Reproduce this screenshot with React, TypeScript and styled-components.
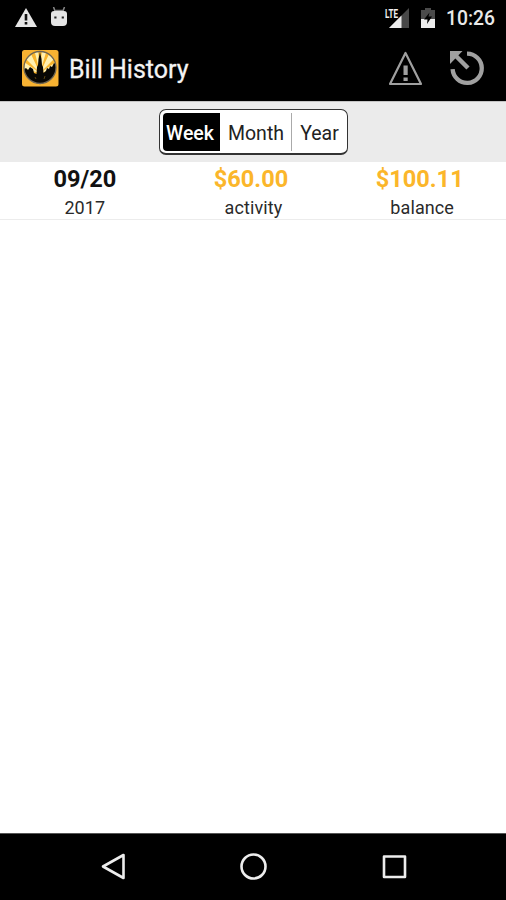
import React from 'react';
import styled, { createGlobalStyle } from 'styled-components';

const GlobalStyle = createGlobalStyle`
  * { box-sizing: border-box; }
  body { margin: 0; background: #fff; font-family: Roboto, "Liberation Sans", sans-serif; }
  svg { display: block; flex: none; }
`;

const Screen = styled.div`
  width: 506px;
  height: 900px;
  display: flex;
  flex-direction: column;
  background: #fff;
  overflow: hidden;
`;

const StatusBar = styled.header`
  height: 36px;
  flex: none;
  display: flex;
  align-items: center;
  justify-content: space-between;
  padding: 0 11px 0 15px;
  background: #000;
`;

const StatusGroup = styled.div<{ $gap: number }>`
  display: flex;
  align-items: center;
  gap: ${(p) => p.$gap}px;
`;

const Clock = styled.span`
  width: 49px;
  padding-top: 1px;
  font-size: 19.3px;
  font-weight: 500;
  line-height: 36px;
  color: #e9e9e9;
  white-space: nowrap;
`;

const AppBar = styled.div`
  height: 65px;
  flex: none;
  display: flex;
  align-items: center;
  padding: 0 21px 1px;
  background: #000;
`;

const Title = styled.h1`
  flex: 1;
  margin: 3px 0 0 10px;
  font-size: 25px;
  font-weight: 400;
  line-height: 32px;
  color: #f4f4f4;
  -webkit-text-stroke: 0.3px #f4f4f4;
`;

const Actions = styled.div`
  display: flex;
  align-items: center;
  gap: 26px;
`;

const FilterStrip = styled.div`
  height: 61px;
  flex: none;
  display: flex;
  justify-content: center;
  padding-top: 7px;
  background: #ebebeb;
  border-top: 1px solid #c4c4c4;
`;

const Segments = styled.div`
  width: 189px;
  height: 46px;
  display: flex;
  padding: 3px;
  margin-left: 1px;
  background: #fff;
  border: 1px solid #333;
  border-bottom-width: 2px;
  border-radius: 7px;
`;

const Segment = styled.button<{ $width: number; $active?: boolean; $divider?: boolean }>`
  width: ${(p) => p.$width}px;
  height: 38px;
  padding: 2px 0 0;
  border: 0;
  border-right: ${(p) => (p.$divider ? '1px solid #aaa' : '0')};
  border-radius: ${(p) => (p.$active ? '4px 0 0 4px' : '0')};
  background: ${(p) => (p.$active ? '#000' : '#fff')};
  color: ${(p) => (p.$active ? '#fff' : '#222')};
  font: ${(p) => (p.$active ? 500 : 400)} 19.5px/38px Roboto, sans-serif;
  text-indent: ${(p) => (p.$active ? '-3px' : p.$divider ? '1px' : '3px')};
  white-space: nowrap;
`;

const Row = styled.div`
  height: 58px;
  flex: none;
  display: grid;
  grid-template-columns: repeat(3, 1fr);
  border-bottom: 1px solid #ececec;
`;

const Cell = styled.div`
  display: flex;
  flex-direction: column;
  align-items: center;
  padding-left: 1px;
`;

const Value = styled.strong<{ $gold?: boolean }>`
  height: 32px;
  font-size: 23.6px;
  font-weight: 700;
  line-height: 34px;
  margin-left: ${(p) => (p.$gold ? '-5px' : '0')};
  color: ${(p) => (p.$gold ? '#fbb62a' : '#111')};
`;

const Label = styled.span`
  font-size: 18px;
  line-height: 27px;
  letter-spacing: 0.1px;
  color: #2a2a2a;
`;

const Content = styled.main`
  flex: 1;
`;

const NavBar = styled.nav`
  height: 67px;
  flex: none;
  display: flex;
  justify-content: center;
  align-items: center;
  gap: 112px;
  padding-left: 1px;
  padding-bottom: 1px;
  background: #000;
  border-top: 1px solid #555;
`;

const WarningSmall = () => (
  <svg width="22" height="20" viewBox="0 0 22 20">
    <path d="M11 0 22 19H0Z" fill="#e6e6e6" />
    <path d="M9.7 6h2.6v6.500H9.7zM9.7 14h2.6v2.500H9.7z" fill="#111" />
  </svg>
);

const Droid = () => (
  <svg width="18" height="22" viewBox="0 0 18 22">
    <path d="M3.500 0 5 4M14.500 0 13 4M5 3.500h8" stroke="#888" strokeWidth="1.500" />
    <path d="M4 4h10q3 0 3 3v8q0 4-4 4H5q-4 0-4-4V7q0-3 3-3Z" fill="#e4e4e4" />
    <path d="M4.300 9.500h2.200v2H4.300zM11.700 9.500h2.200v2h-2.200z" fill="#222" />
  </svg>
);

const Signal = () => (
  <svg width="26" height="22" viewBox="0 0 26 22">
    <path d="M25 1v20H5Z" fill="#484848" />
    <path d="M17.500 8.500V21H5Z" fill="#ededed" />
    <text x="1" y="11" fontFamily="Roboto, sans-serif" fontWeight="700" fontSize="12.500" textLength="13" lengthAdjust="spacingAndGlyphs" fill="#f0f0f0">LTE</text>
  </svg>
);

const Battery = () => (
  <svg width="16" height="21" viewBox="0 0 16 21">
    <path d="M5 0h6v2h4v18H1V2h4Z" fill="#4b4b4b" />
    <path d="M1 11h14v9H1Z" fill="#ededed" />
    <path d="m9.500 4.500-5.500 7h3.500l-.5 4.500 5-7.500H8.500Z" fill="#000" />
  </svg>
);

const Logo = () => (
  <svg width="38" height="38" viewBox="0 0 38 38">
    <defs>
      <clipPath id="disc"><circle cx="19" cy="18.500" r="16" /></clipPath>
    </defs>
    <rect x="1" y="1" width="36.500" height="36.500" rx="2.500" fill="#f7b232" />
    <g clipPath="url(#disc)">
      <path d="M2 2h34v34H2Z" fill="#f8b52e" />
      <path d="M19 24 0 19v-8ZM19 24 2 7 8 1ZM19 24 13 0h4ZM19 24 21 0h5ZM19 24 30 1l6 6ZM19 24 38 11v8Z" fill="#fff0b0" />
      <path d="M2 21 5 19 7 21 9 18 12 20 13 24 15.500 25 16 18 17 16 17.500 10 19 3 20.500 10 21 16 22 18 22.500 24 25 22 26 19 28 20 29 17 31 18 33 14 36 16V36H2Z" fill="#070704" />
      <path d="m14 28 1 2M24 27l-1 3" stroke="#5c4614" strokeWidth="1" />
    </g>
    <circle cx="19" cy="18.500" r="16" fill="none" stroke="#6d6554" strokeWidth="1.300" />
  </svg>
);

const WarningOutline = () => (
  <svg width="35" height="36" viewBox="0 0 35 36">
    <path d="M17.500 3 33 34H2Z" fill="none" stroke="#a0a0a0" strokeWidth="2.200" strokeLinejoin="round" />
    <path d="M15.500 15.500h4.200v9.500h-4.200zM15.500 27.500h4.200v3.500h-4.200z" fill="#a0a0a0" />
  </svg>
);

const Restore = () => (
  <svg width="36" height="36" viewBox="0 0 36 36">
    <path d="M18 3.700A14.600 14.600 0 1 1 3.600 19.200" fill="none" stroke="#a0a0a0" strokeWidth="4.300" />
    <path d="m6 5 13 13" stroke="#a0a0a0" strokeWidth="4.500" />
    <path d="M1 1h12.500L1 14Z" fill="#a0a0a0" />
  </svg>
);

const NavIcon = ({ kind }: { kind: 'back' | 'home' | 'recent' }) => (
  <svg width="29" height="30" viewBox="0 0 29 30" fill="none" stroke="#ededed" strokeWidth="2.600" strokeLinejoin="round">
    {kind === 'back' && <path d="M25.500 3v23L5 14.500Z" />}
    {kind === 'home' && <circle cx="14.500" cy="14.500" r="12" />}
    {kind === 'recent' && <path d="M4 4.500h21v20.500H4Z" />}
  </svg>
);

const totals = [
  { value: '09/20', label: '2017' },
  { value: '$60.00', label: 'activity', gold: true },
  { value: '$100.11', label: 'balance', gold: true },
];

export default function App() {
  return (
    <Screen>
      <GlobalStyle />
      <StatusBar>
        <StatusGroup $gap={13}>
          <WarningSmall />
          <Droid />
        </StatusGroup>
        <StatusGroup $gap={10}>
          <Signal />
          <Battery />
          <Clock>10:26</Clock>
        </StatusGroup>
      </StatusBar>
      <AppBar>
        <Logo />
        <Title>Bill History</Title>
        <Actions>
          <WarningOutline />
          <Restore />
        </Actions>
      </AppBar>
      <FilterStrip>
        <Segments>
          <Segment $width={57} $active>Week</Segment>
          <Segment $width={72} $divider>Month</Segment>
          <Segment $width={52}>Year</Segment>
        </Segments>
      </FilterStrip>
      <Row>
        {totals.map((t) => (
          <Cell key={t.label}>
            <Value $gold={t.gold}>{t.value}</Value>
            <Label>{t.label}</Label>
          </Cell>
        ))}
      </Row>
      <Content />
      <NavBar>
        <NavIcon kind="back" />
        <NavIcon kind="home" />
        <NavIcon kind="recent" />
      </NavBar>
    </Screen>
  );
}
